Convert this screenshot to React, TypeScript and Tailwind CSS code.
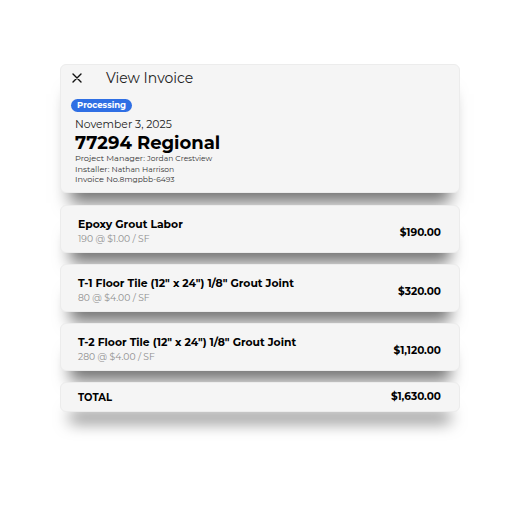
import React from 'react';

interface LineItem {
  title: string;
  detail: string;
  amount: string;
}

const items: LineItem[] = [
  { title: 'Epoxy Grout Labor', detail: '190 @ $1.00 / SF', amount: '$190.00' },
  { title: 'T-1 Floor Tile (12" x 24") 1/8" Grout Joint', detail: '80 @ $4.00 / SF', amount: '$320.00' },
  { title: 'T-2 Floor Tile (12" x 24") 1/8" Grout Joint', detail: '280 @ $4.00 / SF', amount: '$1,120.00' },
];

const card =
  'rounded-md border border-[#ececec] bg-[#f5f5f5] shadow-[0_20px_16px_-10px_rgba(0,0,0,0.55)]';

export default function App() {
  return (
    <div
      className="w-[520px] h-[524px] bg-white pt-[64px] px-[60px] text-black"
      style={{ fontFamily: 'Montserrat, "DejaVu Sans", sans-serif' }}
    >
      <div className={`${card} h-[129px] px-[10px] pt-[1px]`}>
        <div className="flex items-center h-[24px]">
          <svg width="10" height="10" viewBox="0 0 10 10" className="ml-[1px]">
            <path d="M1 1L9 9M9 1L1 9" stroke="#111" strokeWidth="1.4" strokeLinecap="round" />
          </svg>
          <span className="ml-[24px] text-[14px] text-[#222]">View Invoice</span>
        </div>
        <div className="mt-[9px] inline-flex items-center h-[13px] px-[6px] rounded-full bg-[#2f6fe4] text-white text-[8.5px] font-bold">
          Processing
        </div>
        <div className="ml-[4px] mt-[3px] text-[10.8px] text-[#222] leading-[14px]">November 3, 2025</div>
        <div className="ml-[4px] text-[18px] font-bold leading-[23px]">77294 Regional</div>
        <div className="ml-[4px] -mt-[2px] text-[8.2px] text-[#333]">
          <div className="h-[10.5px] leading-[10.5px]">Project Manager: <span className="text-[7.6px]">Jordan Crestview</span></div>
          <div className="h-[10.5px] leading-[10.5px]">Installer: <span className="text-[7.6px]">Nathan Harrison</span></div>
          <div className="h-[10.5px] leading-[10.5px]">Invoice No.<span className="text-[7.6px]">8mgpbb-6493</span></div>
        </div>
      </div>

      <div className="mt-[12px] flex flex-col gap-[11px]">
        {items.map((item) => (
          <div key={item.title} className={`${card} h-[48px] px-[17px] pt-[5px] flex items-center justify-between`}>
            <div className="flex flex-col">
              <span className="text-[10.8px] font-bold leading-[14px]">{item.title}</span>
              <span className="text-[9.2px] text-[#8e8e8e] leading-[14px]">{item.detail}</span>
            </div>
            <span className="text-[10.5px] font-bold mt-[3px] mr-[1px]">{item.amount}</span>
          </div>
        ))}
        <div className={`${card} h-[30px] px-[17px] flex items-center justify-between`}>
          <span className="text-[10px] font-bold">TOTAL</span>
          <span className="text-[10.5px] font-bold mr-[1px]">$1,630.00</span>
        </div>
      </div>
    </div>
  );
}
